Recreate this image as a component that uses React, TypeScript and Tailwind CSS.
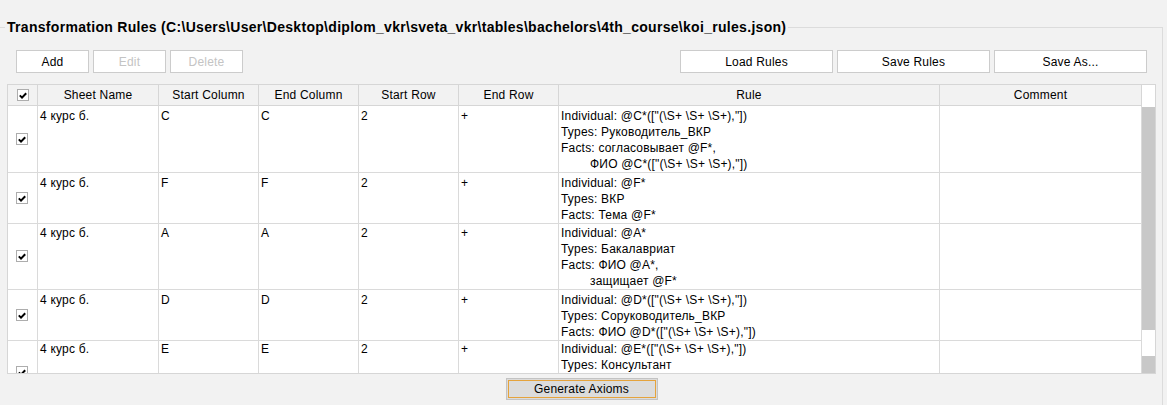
const rows = [
  {
    sheet: "4 курс б.",
    start: "C",
    end: "C",
    startRow: "2",
    endRow: "+",
    h: "h-[67px]",
    rule: [
      'Individual: @C*(["(\\S+ \\S+ \\S+),"])',
      "Types: Руководитель_ВКР",
      "Facts: согласовывает @F*,",
      '\tФИО @C*(["(\\S+ \\S+ \\S+),"])',
    ],
  },
  {
    sheet: "4 курс б.",
    start: "F",
    end: "F",
    startRow: "2",
    endRow: "+",
    h: "h-[50px]",
    rule: ["Individual: @F*", "Types: ВКР", "Facts: Тема @F*"],
  },
  {
    sheet: "4 курс б.",
    start: "A",
    end: "A",
    startRow: "2",
    endRow: "+",
    h: "h-[67px]",
    rule: ["Individual: @A*", "Types: Бакалавриат", "Facts: ФИО @A*,", "\tзащищает @F*"],
  },
  {
    sheet: "4 курс б.",
    start: "D",
    end: "D",
    startRow: "2",
    endRow: "+",
    h: "h-[49px]",
    rule: [
      'Individual: @D*(["(\\S+ \\S+ \\S+),"])',
      "Types: Соруководитель_ВКР",
      'Facts: ФИО @D*(["(\\S+ \\S+ \\S+),"])',
    ],
  },
  {
    sheet: "4 курс б.",
    start: "E",
    end: "E",
    startRow: "2",
    endRow: "+",
    h: "h-[66px]",
    rule: [
      'Individual: @E*(["(\\S+ \\S+ \\S+),"])',
      "Types: Консультант",
      'Facts: ФИО @E*(["(\\S+ \\S+ \\S+),"])',
      "\tконсультирует @F*",
    ],
  },
];

const headers = ["Sheet Name", "Start Column", "End Column", "Start Row", "End Row", "Rule", "Comment"];

function CheckBox() {
  return (
    <div className="flex h-[12px] w-[12px] items-center justify-center border border-[#adadad] bg-white">
      <svg width="8" height="7" viewBox="0 0 8 7">
        <path d="M0.8 3.4 L3 5.6 L7.2 1.2" fill="none" stroke="#000" strokeWidth="2" />
      </svg>
    </div>
  );
}

function Btn({ label, disabled }: { label: string; disabled?: boolean }) {
  return (
    <button
      className={`h-[23px] border border-[#cccccc] bg-white text-[12px] ${
        disabled ? "text-[#c4c4c4]" : "text-black"
      }`}
    >
      {label}
    </button>
  );
}

export default function App() {
  return (
    <div
      className="h-[405px] w-[1167px] overflow-hidden bg-[#f2f2f2] text-[12px] tracking-[0.2px] text-black"
      style={{ fontFamily: '"Liberation Sans", Arial, sans-serif' }}
    >
      <fieldset className="ml-[-4px] mt-[19px] h-[420px] w-[1167px] border border-[#dcdcdc]">
        <legend className="ml-[8px] px-[2px] text-[14px] font-bold leading-[16px] tracking-[0.3px]">
          Transformation Rules (C:\Users\User\Desktop\diplom_vkr\sveta_vkr\tables\bachelors\4th_course\koi_rules.json)
        </legend>

        <div className="mt-[15px] flex h-[23px] pl-[19px] pr-[15px]">
          <div className="flex gap-[4px] [&>button]:w-[73px]">
            <Btn label="Add" />
            <Btn label="Edit" disabled />
            <Btn label="Delete" disabled />
          </div>
          <div className="ml-auto flex gap-[4px] [&>button]:w-[153px]">
            <Btn label="Load Rules" />
            <Btn label="Save Rules" />
            <Btn label="Save As..." />
          </div>
        </div>

        <div className="ml-[10px] mt-[11px] flex h-[290px] w-[1149px] overflow-hidden border border-[#d6d6d6] bg-white">
          <div className="w-[1134px] overflow-hidden">
            <div className="grid grid-cols-[30px_121px_100px_100px_100px_100px_381px_202px] bg-[#f2f2f2]">
              <div className="flex h-[21px] items-center justify-center border-b border-r border-[#d6d6d6] pl-[1px]">
                <CheckBox />
              </div>
              {headers.map((h) => (
                <div
                  key={h}
                  className="flex h-[21px] items-center justify-center border-b border-r border-[#d6d6d6]"
                >
                  {h}
                </div>
              ))}
            </div>
            {rows.map((r, i) => (
              <div
                key={i}
                className={`grid grid-cols-[30px_121px_100px_100px_100px_100px_381px_202px] ${r.h}`}
              >
                <div className="flex items-center justify-center border-b border-r border-[#dadada] pr-[1px]">
                  <CheckBox />
                </div>
                {[r.sheet, r.start, r.end, r.startRow, r.endRow].map((v, j) => (
                  <div key={j} className="border-b border-r border-[#dadada] pl-[2px] pt-[2px] leading-[16px]">
                    {v}
                  </div>
                ))}
                <div className="border-b border-r border-[#dadada] pl-[2px] pt-[2px] leading-[16px]">
                  {r.rule.map((line, k) =>
                    line.startsWith("\t") ? (
                      <div key={k} className="pl-[29px]">
                        {line.slice(1)}
                      </div>
                    ) : (
                      <div key={k}>{line}</div>
                    )
                  )}
                </div>
                <div className="border-b border-r border-[#dadada]" />
              </div>
            ))}
          </div>
          <div className="flex w-[13px] flex-col">
            <div className="h-[22px] bg-white" />
            <div className="h-[223px] bg-[#c8c8c8]" />
            <div className="h-[26px] bg-white" />
            <div className="flex-1 bg-[#c8c8c8]" />
          </div>
        </div>

        <div className="ml-[10px] mt-[4px] flex w-[1149px] justify-center">
          <button className="h-[22px] w-[152px] border border-[#c3c3c3] bg-[#dcdcdc] text-[12px] leading-[20px] shadow-[inset_0_0_0_1px_#dcdcdc,inset_0_0_0_2px_#e5a33c]">
            Generate Axioms
          </button>
        </div>
      </fieldset>
    </div>
  );
}
